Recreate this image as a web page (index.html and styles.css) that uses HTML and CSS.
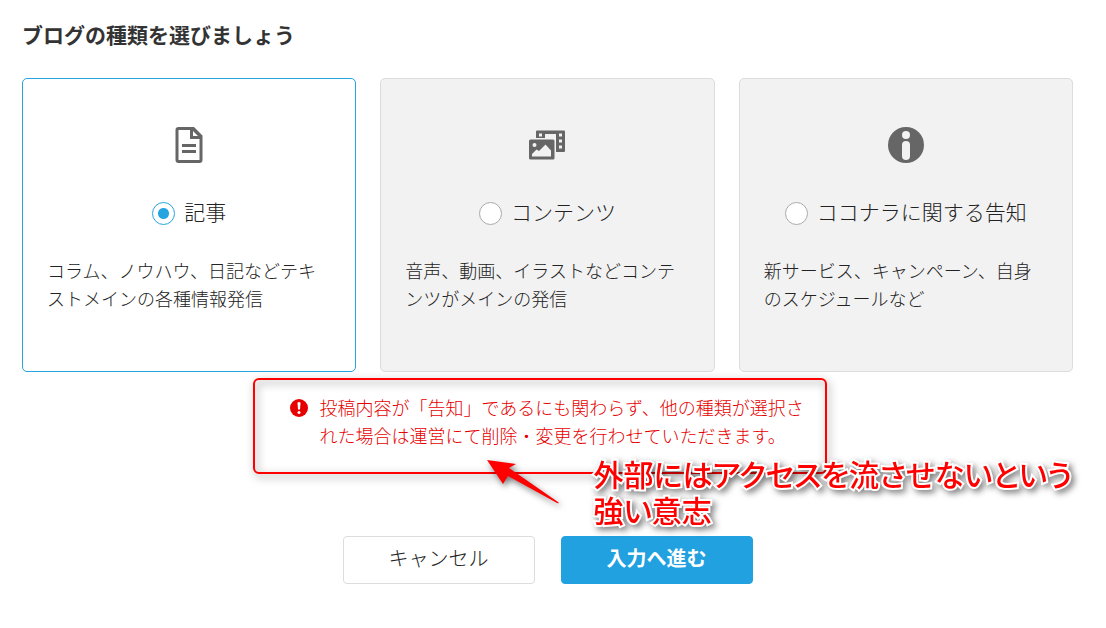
FILE: index.html
```html
<!DOCTYPE html>
<html lang="ja">
<head>
<meta charset="utf-8">
<meta name="viewport" content="width=device-width, initial-scale=1">
<title>ブログの種類を選びましょう</title>
<link rel="stylesheet" href="styles.css">
</head>
<body>
<form class="page">
  <h1 class="title" id="title">ブログの種類を選びましょう</h1>

  <div class="cards" role="radiogroup" aria-labelledby="title">
    <label class="card">
      <svg class="card-icon" viewBox="0 0 36 36" aria-hidden="true">
        <path fill="#666" fill-rule="evenodd" d="M7.500 0H23L31.500 8.500V33Q31.500 36 28.500 36H7.500Q4.500 36 4.500 33V3Q4.500 0 7.500 0ZM7.500 3V33H28.500V12H19V3ZM22 4V9H27Z"/>
        <path fill="#666" d="M11 17H25V20H11ZM11 23H25V26H11Z"/>
      </svg>
      <span class="choice"><input class="radio" type="radio" name="kind" checked><span>記事</span></span>
      <span class="description">コラム、ノウハウ、日記などテキストメインの各種情報発信</span>
    </label>
    <label class="card">
      <svg class="card-icon" viewBox="0 0 36 36" aria-hidden="true">
        <path fill="#666" fill-rule="evenodd" d="M8 3.500H35Q36 3.500 36 4.500V24Q36 25 35 25H27V7H16V11H7V4.500Q7 3.500 8 3.500ZM10 6.500V9.500H13V6.500ZM30 6.500V9.500H33V6.500ZM30 12.500V15.500H33V12.500ZM30 18.500V21.500H33V18.500Z"/>
        <path fill="#666" fill-rule="evenodd" d="M1.500 12.500H24Q25.500 12.500 25.500 14V31Q25.500 32.500 24 32.500H1.500Q0 32.500 0 31V14Q0 12.500 1.500 12.500ZM5.500 16A2 2 0 1 0 5.500 20A2 2 0 1 0 5.500 16ZM3 29.500H22V23.500L16.500 17.500L10 24L7.500 22.500L3 27Z"/>
      </svg>
      <span class="choice"><input class="radio" type="radio" name="kind"><span>コンテンツ</span></span>
      <span class="description">音声、動画、イラストなどコンテンツがメインの発信</span>
    </label>
    <label class="card">
      <svg class="card-icon" viewBox="0 0 36 36" aria-hidden="true">
        <circle cx="18" cy="18" r="18" fill="#666"/>
        <circle cx="18" cy="8" r="4" fill="#f2f2f2"/>
        <rect x="14" y="14" width="8" height="19" rx="4" fill="#f2f2f2"/>
      </svg>
      <span class="choice"><input class="radio" type="radio" name="kind"><span>ココナラに関する告知</span></span>
      <span class="description">新サービス、キャンペーン、自身のスケジュールなど</span>
    </label>
  </div>

  <div class="notice">
    <svg class="notice-icon" viewBox="0 0 18 18" aria-hidden="true">
      <circle cx="9" cy="9" r="9" fill="#e60000"/>
      <path fill="#fff" d="M7.500 4Q7.500 3 9 3T10.500 4L10 10.500H8Z"/>
      <circle cx="9" cy="13.500" r="1.500" fill="#fff"/>
    </svg>
    <p class="notice-text">投稿内容が「告知」であるにも関わらず、他の種類が選択された場合は運営にて削除・変更を行わせていただきます。</p>
    <div class="frame"></div>
    <svg class="arrow" viewBox="0 0 80 50" aria-hidden="true">
      <path fill="#f00" d="M0 0L29 4L22 8L71 42Q73 44 70 43L21 16L16 24Z"/>
    </svg>
    <p class="comment">外部にはアクセスを流させないという<br>強い意志</p>
  </div>

  <div class="actions">
    <button class="button" type="button">キャンセル</button>
    <button class="button button-primary" type="submit">入力へ進む</button>
  </div>
</form>
</body>
</html>
```
FILE: styles.css
```css
* {
  box-sizing: border-box;
}

body {
  margin: 0;
  background: #fff;
  color: #222;
  font-family: "Noto Sans CJK JP", sans-serif;
  font-size: 18px;
  font-weight: 300;
  line-height: 28px;
}

.page {
  padding: 20px 33px 44px 22px;
}

.title {
  margin: 0 0 30px;
  color: #333;
  font-size: 21px;
  font-weight: 700;
  line-height: 28px;
}

.cards {
  display: grid;
  grid-template-columns: repeat(3, 1fr);
  gap: 24px;
}

.card {
  display: flex;
  flex-direction: column;
  align-items: center;
  padding: 48px 24px 59px;
  border: 1px solid #dcdcdc;
  border-radius: 5px;
  background: #f2f2f2;
  cursor: pointer;
}

.card:has(.radio:checked) {
  border-color: #25a4df;
  background: #fff;
}

.card-icon {
  width: 36px;
  height: 36px;
}

.choice {
  display: flex;
  align-items: flex-end;
  gap: 9px;
  margin: 34px 0 31px;
  font-size: 21px;
}

.radio {
  appearance: none;
  width: 23px;
  height: 23px;
  margin: 0;
  border: 1px solid #aaa;
  border-radius: 50%;
  background: #fff;
}

.radio:checked {
  border-color: #25a4df;
  background: radial-gradient(circle, #25a4df 5px, #fff 6px);
}

.description {
  align-self: stretch;
}

.notice {
  position: relative;
  display: flex;
  justify-content: center;
  gap: 12px;
  margin-top: 21px;
  color: #e60000;
}

.notice-icon {
  width: 18px;
  height: 18px;
  margin-top: 6px;
}

.notice-text {
  width: 486px;
  margin: 0;
}

.frame {
  position: absolute;
  top: -15px;
  left: calc(50% - 295px);
  width: 574px;
  height: 96px;
  border: 2px solid #f00;
  border-radius: 6px;
  filter: drop-shadow(2px 3px 4px rgba(0, 0, 0, 0.5));
}

.arrow {
  position: absolute;
  top: 67px;
  left: calc(50% - 61px);
  width: 80px;
  height: 50px;
  overflow: visible;
  filter: drop-shadow(2px 3px 3px rgba(0, 0, 0, 0.5));
}

.comment {
  position: absolute;
  top: 62px;
  left: calc(50% + 46px);
  margin: 0;
  color: #f00;
  font-size: 30px;
  font-weight: 500;
  font-feature-settings: "palt";
  line-height: 36px;
  white-space: nowrap;
  -webkit-text-stroke: 4px #fff;
  paint-order: stroke fill;
  filter: drop-shadow(3px 3px 3px rgba(0, 0, 0, 0.5));
}

.actions {
  display: flex;
  justify-content: center;
  gap: 26px;
  margin-top: 87px;
}

.button {
  width: 192px;
  height: 48px;
  padding: 0 0 5px;
  border: 1px solid #dcdcdc;
  border-radius: 4px;
  background: #fff;
  color: #222;
  font: inherit;
  font-size: 20px;
  cursor: pointer;
}

.button-primary {
  border-color: #21a1df;
  background: #21a1df;
  color: #fff;
  font-weight: 700;
}
```
